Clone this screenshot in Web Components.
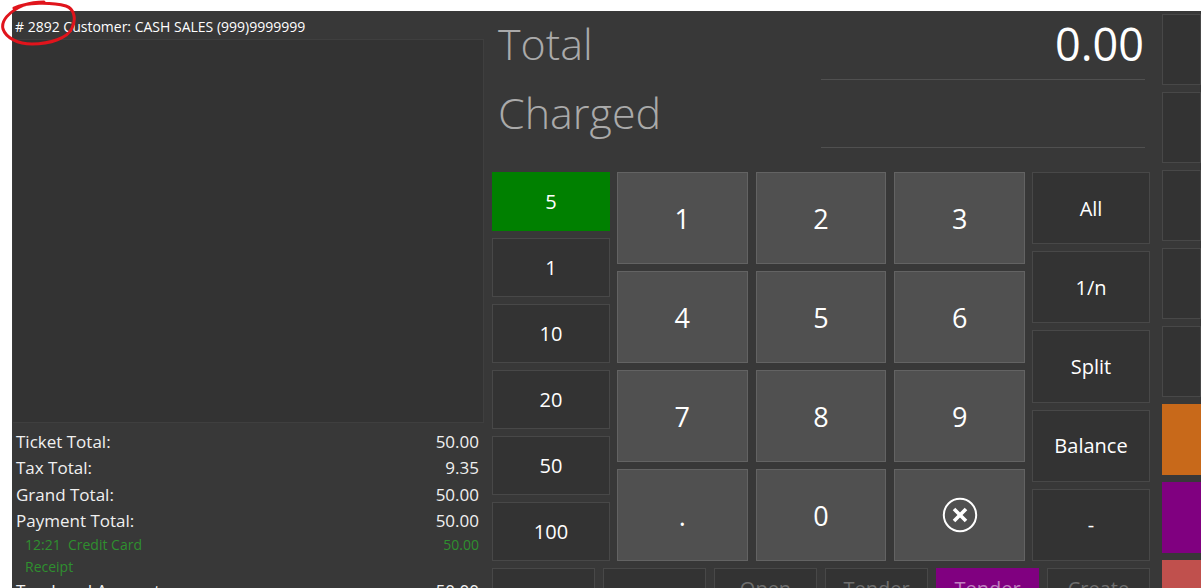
<!DOCTYPE html>
<html>
<head>
<meta charset="utf-8">
<style>
  html, body { margin: 0; height: 100%; overflow: hidden; background: #fff; }
  body { padding: 11px 0 0 12px; box-sizing: border-box; font-family: "Open Sans", "Liberation Sans", sans-serif; }
</style>
</head>
<body>
<pos-app>
  <ticket-panel slot="ticket" number="2892" customer="CASH SALES (999)9999999">
    <total-line label="Ticket Total:" value="50.00"></total-line>
    <total-line label="Tax Total:" value="9.35"></total-line>
    <total-line label="Grand Total:" value="50.00"></total-line>
    <total-line label="Payment Total:" value="50.00"></total-line>
    <payment-line label="12:21&nbsp; Credit Card" value="50.00"></payment-line>
    <payment-line label="Receipt"></payment-line>
    <total-line label="Tendered Amount:" value="50.00"></total-line>
  </ticket-panel>

  <amount-row slot="amounts" label="Total" value="0.00"></amount-row>
  <amount-row slot="amounts" label="Charged"></amount-row>

  <pos-button slot="tender" variant="green">5</pos-button>
  <pos-button slot="tender">1</pos-button>
  <pos-button slot="tender">10</pos-button>
  <pos-button slot="tender">20</pos-button>
  <pos-button slot="tender">50</pos-button>
  <pos-button slot="tender">100</pos-button>

  <pos-button slot="keys" variant="key">1</pos-button>
  <pos-button slot="keys" variant="key">2</pos-button>
  <pos-button slot="keys" variant="key">3</pos-button>
  <pos-button slot="keys" variant="key">4</pos-button>
  <pos-button slot="keys" variant="key">5</pos-button>
  <pos-button slot="keys" variant="key">6</pos-button>
  <pos-button slot="keys" variant="key">7</pos-button>
  <pos-button slot="keys" variant="key">8</pos-button>
  <pos-button slot="keys" variant="key">9</pos-button>
  <pos-button slot="keys" variant="key">.</pos-button>
  <pos-button slot="keys" variant="key">0</pos-button>
  <pos-button slot="keys" variant="key">
    <svg width="36" height="36" viewBox="0 0 36 36" fill="none" stroke="#fff" style="display:block">
      <circle cx="18" cy="18" r="16.2" stroke-width="2"/>
      <path d="M12 12 L24 24 M24 12 L12 24" stroke-width="3.6"/>
    </svg>
  </pos-button>

  <pos-button slot="modes">All</pos-button>
  <pos-button slot="modes">1/n</pos-button>
  <pos-button slot="modes">Split</pos-button>
  <pos-button slot="modes">Balance</pos-button>
  <pos-button slot="modes">-</pos-button>

  <pos-button slot="actions"></pos-button>
  <pos-button slot="actions"></pos-button>
  <pos-button slot="actions" variant="muted">Open</pos-button>
  <pos-button slot="actions" variant="muted">Tender</pos-button>
  <pos-button slot="actions" variant="purple-muted">Tender</pos-button>
  <pos-button slot="actions" variant="muted">Create</pos-button>

  <pos-button slot="side"></pos-button>
  <pos-button slot="side"></pos-button>
  <pos-button slot="side"></pos-button>
  <pos-button slot="side"></pos-button>
  <pos-button slot="side"></pos-button>
  <pos-button slot="side" variant="orange"></pos-button>
  <pos-button slot="side" variant="purple"></pos-button>
  <pos-button slot="side" variant="red"></pos-button>
</pos-app>

<script>
class PosApp extends HTMLElement {
  constructor() {
    super();
    this.attachShadow({ mode: "open" });
    this.shadowRoot.innerHTML = `
      <style>
        :host { display: flex; height: 640px; background: #383838; color: #fff; position: relative; }
        .ticket { display: block; width: 472px; flex: none; }
        .main { width: 658px; margin-left: 8px; flex: none; display: flex; flex-direction: column; }
        .amounts { height: 137px; margin-bottom: 24px; display: flex; flex-direction: column; }
        .pad { display: flex; gap: 7px; height: 389px; }
        .tender { width: 118px; flex: none; display: grid; grid-template-rows: repeat(6, 59px); row-gap: 7px; }
        .keys { flex: 1; display: grid; grid-template-columns: repeat(3, 1fr); grid-template-rows: repeat(4, 92px); gap: 7px 8px; }
        .modes { width: 118px; flex: none; display: grid; grid-template-rows: repeat(5, 1fr); row-gap: 7px; }
        .actions { display: grid; grid-template-columns: repeat(6, 103px); column-gap: 8px; height: 44px; margin-top: 7px; }
        .side { flex: 1; margin-left: 12px; padding-top: 3px; display: grid; grid-auto-rows: 71px; row-gap: 7px; }
        .mark { position: absolute; left: -12px; top: -11px; pointer-events: none; }
      </style>
      <slot class="ticket" name="ticket"></slot>
      <div class="main">
        <div class="amounts"><slot name="amounts"></slot></div>
        <div class="pad">
          <div class="tender"><slot name="tender"></slot></div>
          <div class="keys"><slot name="keys"></slot></div>
          <div class="modes"><slot name="modes"></slot></div>
        </div>
        <div class="actions"><slot name="actions"></slot></div>
      </div>
      <div class="side"><slot name="side"></slot></div>
      <svg class="mark" width="90" height="50" viewBox="0 0 90 50" fill="none">
        <path d="M14 8 C26 2 52 2 66 6 C75 9 76 20 72 28 C68 38 50 44 32 44 C18 44 6 38 3 29 C1 21 8 12 24 5 C30 3 38 2 44 2"
          stroke="#e0141c" stroke-width="3" stroke-linecap="round"/>
      </svg>
    `;
  }
}

class TicketPanel extends HTMLElement {
  constructor() {
    super();
    this.attachShadow({ mode: "open" });
  }

  connectedCallback() {
    const number = this.getAttribute("number");
    const customer = this.getAttribute("customer");
    this.shadowRoot.innerHTML = `
      <style>
        :host { display: flex; flex-direction: column; height: 100%; }
        .head { height: 28px; padding: 7px 0 0 3px; box-sizing: border-box; font-size: 14px; line-height: 18px; color: #fff; white-space: nowrap; }
        .list { height: 384px; margin-left: 1px; box-sizing: border-box; background: #333; border: 1px solid #3f3f3f; border-left: 0; }
        .totals { padding: 6px 5px 0 4px; }
      </style>
      <div class="head"># ${number} Customer: ${customer}</div>
      <div class="list"></div>
      <div class="totals"><slot></slot></div>
    `;
  }
}

class TotalLine extends HTMLElement {
  constructor() {
    super();
    this.attachShadow({ mode: "open" });
  }

  connectedCallback() {
    const label = this.getAttribute("label");
    const value = this.getAttribute("value") || "";
    this.shadowRoot.innerHTML = `
      <style>
        :host { display: flex; justify-content: space-between; height: 26.3px; line-height: 26px; font-size: 17px; color: #f0f0f0; }
      </style>
      <span>${label}</span><span>${value}</span>
    `;
  }
}

class PaymentLine extends HTMLElement {
  constructor() {
    super();
    this.attachShadow({ mode: "open" });
  }

  connectedCallback() {
    const label = this.getAttribute("label");
    const value = this.getAttribute("value") || "";
    this.shadowRoot.innerHTML = `
      <style>
        :host { display: flex; justify-content: space-between; height: 22px; line-height: 22px; padding-left: 9px; font-size: 14px; color: #2f8f2f; }
      </style>
      <span>${label}</span><span>${value}</span>
    `;
  }
}

class AmountRow extends HTMLElement {
  constructor() {
    super();
    this.attachShadow({ mode: "open" });
  }

  connectedCallback() {
    const label = this.getAttribute("label");
    const value = this.getAttribute("value") || "";
    this.shadowRoot.innerHTML = `
      <style>
        :host { display: flex; align-items: flex-start; justify-content: space-between; position: relative; flex: 1; padding: 0 11px 0 6px; }
        .label { font-weight: 300; font-size: 43px; line-height: 66px; color: #aaa; }
        .value { font-size: 45px; line-height: 66px; color: #fff; margin-right: -5px; }
        .rule { position: absolute; right: 5px; bottom: 0; width: 324px; height: 1px; background: #505050; }
      </style>
      <span class="label">${label}</span><span class="value">${value}</span>
      <div class="rule"></div>
    `;
  }
}

class PosButton extends HTMLElement {
  constructor() {
    super();
    this.attachShadow({ mode: "open" });
    this.shadowRoot.innerHTML = `
      <style>
        :host { display: flex; align-items: center; justify-content: center; box-sizing: border-box; min-width: 0; background: #333; border: 1px solid #484848; font-size: 20px; color: #fff; }
        :host([variant="key"]) { background: #505050; border-color: #636363; font-size: 27px; }
        :host([variant="green"]) { background: #008000; border-color: #008000; }
        :host([variant="orange"]) { background: #c8691a; border-color: #c8691a; }
        :host([variant="purple"]) { background: #800080; border-color: #800080; }
        :host([variant="red"]) { background: #c0504d; border-color: #c0504d; }
        :host([variant="muted"]) { color: #6e6e6e; align-items: flex-start; line-height: 40px; }
        :host([variant="purple-muted"]) { background: #800080; border-color: #800080; color: #c080c0; align-items: flex-start; line-height: 40px; }
      </style>
      <slot></slot>
    `;
  }
}

customElements.define("pos-app", PosApp);
customElements.define("ticket-panel", TicketPanel);
customElements.define("total-line", TotalLine);
customElements.define("payment-line", PaymentLine);
customElements.define("amount-row", AmountRow);
customElements.define("pos-button", PosButton);
</script>
</body>
</html>
